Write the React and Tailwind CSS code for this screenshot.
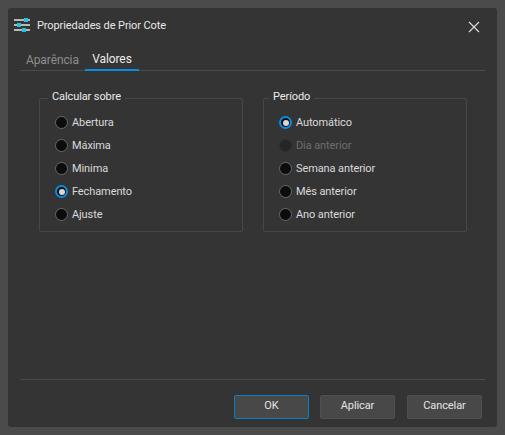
import React from 'react';

const font = { fontFamily: 'Roboto, sans-serif' };

const Radio = ({ label, checked, disabled }) => (
  <div className="flex h-[23px] items-center gap-[4px]">
    {checked ? (
      <span className="flex h-[13px] w-[13px] items-center justify-center rounded-full border-2 border-[#0a8ddf] bg-[#0c0c0c]">
        <span className="h-[6px] w-[6px] rounded-full bg-[#d8d8d8]" />
      </span>
    ) : disabled ? (
      <span className="h-[13px] w-[13px] rounded-full border border-[#2f2f2f] bg-[#262626]" />
    ) : (
      <span className="h-[13px] w-[13px] rounded-full border border-[#6a6a6a] bg-[#0c0c0c]" />
    )}
    <span className={`pt-[2px] ${disabled ? 'text-[#6e6e6e]' : 'text-[#dadada]'}`}>{label}</span>
  </div>
);

const Group = ({ title, items, legend }) => (
  <div className="relative h-[134px] w-[204px] rounded-[2px] border border-[#474747] pl-[15px] pt-[12px]">
    <span className={`absolute top-[-10px] h-[16px] bg-[#343434] px-[4px] leading-[16px] text-[#ececec] ${legend}`}>{title}</span>
    {items.map((it) => (
      <Radio key={it.label} {...it} />
    ))}
  </div>
);

const Button = ({ children, primary, className }) => (
  <button className={`h-[24px] w-[75px] rounded-[2px] border bg-[#484848] text-[#e4e4e4] ${primary ? 'border-[#0a7fc4]' : 'border-[#505050]'} ${className || ''}`}>
    {children}
  </button>
);

export default function App() {
  return (
    <div className="h-[435px] w-[505px] bg-[#4b4b4b] p-[8px] text-[11px] tracking-[-0.1px]" style={font}>
      <div className="flex h-[419px] w-[489px] flex-col rounded-[3px] bg-[#343434] px-[12px]">
        <div className="flex h-[36px] shrink-0 items-center">
          <svg width="17" height="14" viewBox="0 0 17 14" className="mb-[2px] ml-[-6px]">
            <rect x="0" y="1" width="16" height="2" fill="#b8b8b8" />
            <rect x="0" y="6" width="16" height="2" fill="#b8b8b8" />
            <rect x="0" y="11" width="16" height="2" fill="#b8b8b8" />
            <rect x="10" y="0" width="4" height="4" fill="#1fc4e4" />
            <rect x="3" y="5" width="4" height="4" fill="#1fc4e4" />
            <rect x="8" y="10" width="4" height="4" fill="#1fc4e4" />
          </svg>
          <span className="ml-[6px] text-[#e8e8e8]">Propriedades de Prior Cote</span>
          <svg width="12" height="12" viewBox="0 0 12 12" className="ml-auto mr-[5px] mt-[2px]">
            <path d="M1 1 L11 11 M11 1 L1 11" stroke="#e0e0e0" strokeWidth="1.1" />
          </svg>
        </div>

        <div className="flex h-[27px] shrink-0 items-end border-b border-[#4a4a4a] text-[12px]">
          <span className="ml-[6px] w-[59px] pb-[2px] leading-[16px] text-[#8e8e8e]">Aparência</span>
          <span className="mb-[-1px] w-[54px] border-b-2 border-[#0a8ddf] pb-[2px] text-center leading-[16px] text-[#ececec]">Valores</span>
        </div>

        <div className="flex flex-1 gap-[20px] pl-[19px] pt-[27px]">
          <Group
            title="Calcular sobre"
            legend="left-[8px]"
            items={[
              { label: 'Abertura' },
              { label: 'Máxima' },
              { label: 'Minima' },
              { label: 'Fechamento', checked: true },
              { label: 'Ajuste' },
            ]}
          />
          <Group
            title="Período"
            legend="left-[5px]"
            items={[
              { label: 'Automático', checked: true },
              { label: 'Dia anterior', disabled: true },
              { label: 'Semana anterior' },
              { label: 'Mês anterior' },
              { label: 'Ano anterior' },
            ]}
          />
        </div>

        <div className="flex h-[48px] shrink-0 items-center justify-end gap-[11px] border-t border-[#4a4a4a] pr-[3px] pt-[6px]">
          <Button primary>OK</Button>
          <Button>Aplicar</Button>
          <Button className="ml-[1px]">Cancelar</Button>
        </div>
      </div>
    </div>
  );
}
